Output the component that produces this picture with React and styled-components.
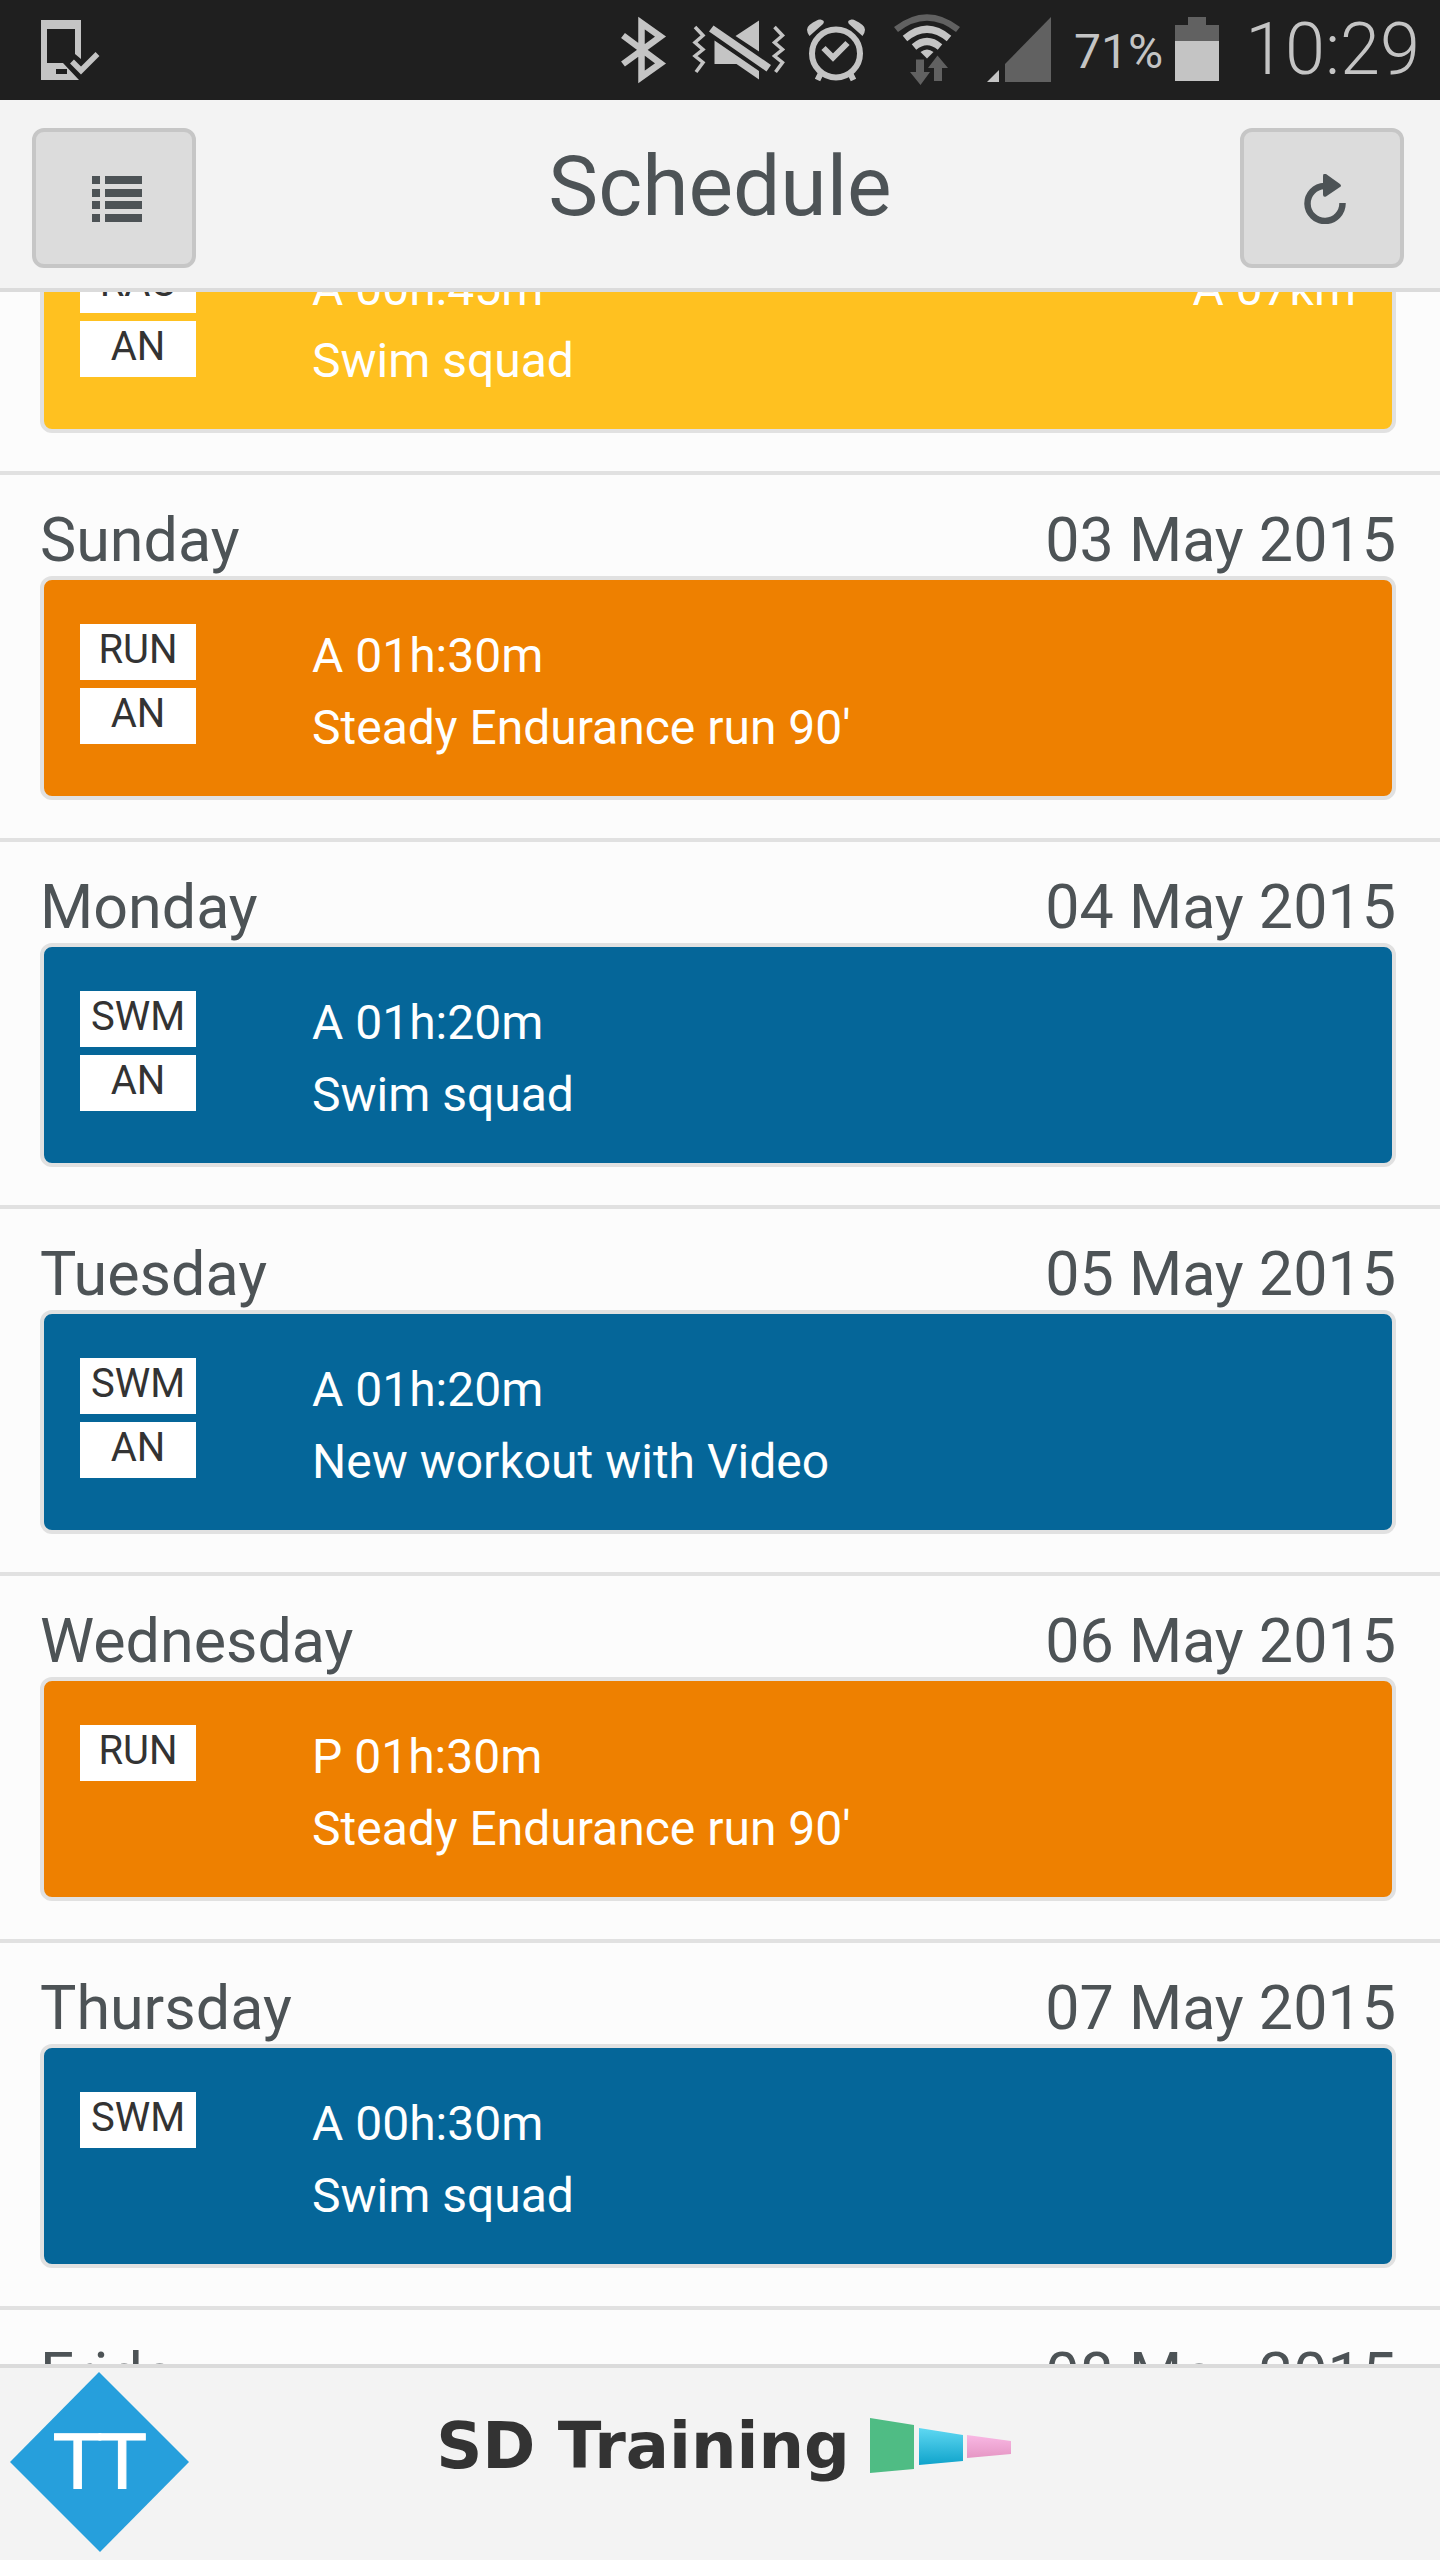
import React, { useLayoutEffect, useRef } from 'react';
import styled, { createGlobalStyle } from 'styled-components';

const colors = {
  statusBar: '#1f1f1f',
  statusIcon: '#c4c4c4',
  statusDim: '#616161',
  bar: '#f3f3f3',
  barBorder: '#dbdbdb',
  page: '#fcfcfc',
  line: '#e1e1e1',
  button: '#dcdcdc',
  buttonBorder: '#c6c6c6',
  text: '#4d5356',
  dark: '#333333',
  white: '#ffffff',
  brand: '#269fdc',
};

const sports = {
  RAC: '#ffc120',
  RUN: '#ee8000',
  SWM: '#056699',
};

const SCROLL_START = 188;

const days = [
  {
    name: 'Saturday',
    date: '02 May 2015',
    workout: { sport: 'RAC', tags: ['RAC', 'AN'], time: 'A 00h:45m', distance: 'A 07km', title: 'Swim squad' },
  },
  {
    name: 'Sunday',
    date: '03 May 2015',
    workout: { sport: 'RUN', tags: ['RUN', 'AN'], time: 'A 01h:30m', title: "Steady Endurance run 90'" },
  },
  {
    name: 'Monday',
    date: '04 May 2015',
    workout: { sport: 'SWM', tags: ['SWM', 'AN'], time: 'A 01h:20m', title: 'Swim squad' },
  },
  {
    name: 'Tuesday',
    date: '05 May 2015',
    workout: { sport: 'SWM', tags: ['SWM', 'AN'], time: 'A 01h:20m', title: 'New workout with Video' },
  },
  {
    name: 'Wednesday',
    date: '06 May 2015',
    workout: { sport: 'RUN', tags: ['RUN'], time: 'P 01h:30m', title: "Steady Endurance run 90'" },
  },
  {
    name: 'Thursday',
    date: '07 May 2015',
    workout: { sport: 'SWM', tags: ['SWM'], time: 'A 00h:30m', title: 'Swim squad' },
  },
  { name: 'Friday', date: '08 May 2015' },
];

const GlobalStyle = createGlobalStyle`
  *,
  *:before,
  *:after {
    box-sizing: border-box;
  }

  body {
    margin: 0;
    background: ${colors.page};
    font-family: Roboto, 'Liberation Sans', sans-serif;
  }
`;

const Screen = styled.div`
  display: flex;
  flex-direction: column;
  height: 100vh;
  color: ${colors.text};
`;

const StatusBar = styled.div`
  display: flex;
  flex: none;
  align-items: center;
  justify-content: space-between;
  padding: 0 20px 0 40px;
  background: ${colors.statusBar};
  color: ${colors.statusIcon};

  svg {
    display: block;
  }
`;

const StatusGroup = styled.div`
  display: flex;
  align-items: center;
  gap: 20px;
`;

const Battery = styled.div`
  display: flex;
  align-items: flex-end;
  gap: 12px;
  padding-right: 6px;
  font-size: 48px;
  line-height: 96px;
`;

const Clock = styled.time`
  font-size: 72px;
  font-weight: 300;
  line-height: 96px;
`;

const Header = styled.header`
  display: flex;
  flex: none;
  align-items: center;
  justify-content: space-between;
  padding: 28px 36px 20px 32px;
  border-bottom: 4px solid ${colors.barBorder};
  background: ${colors.bar};
`;

const Title = styled.h1`
  margin: 0;
  padding: 0 0 22px 4px;
  font-size: 84px;
  font-weight: 400;
  line-height: 96px;
`;

const HeaderButton = styled.button`
  display: flex;
  align-items: center;
  justify-content: center;
  width: 164px;
  height: 140px;
  padding: 2px 0 0 6px;
  border: 4px solid ${colors.buttonBorder};
  border-radius: 12px;
  background: ${colors.button};
  color: ${colors.text};
  cursor: pointer;
`;

const Schedule = styled.main`
  flex: 1;
  min-height: 0;
  overflow-y: auto;
  scrollbar-width: none;
`;

const Day = styled.section`
  padding: 0 44px 38px 40px;
  border-top: 4px solid ${colors.line};
`;

const DayHeading = styled.div`
  display: flex;
  justify-content: space-between;
  padding-top: 29px;
  font-size: 61px;
  line-height: 72px;
`;

const DayName = styled.h2`
  margin: 0;
  font-size: inherit;
  font-weight: 400;
`;

const Card = styled.article`
  display: flex;
  padding: 40px 36px 32px;
  border: 4px solid ${colors.line};
  border-radius: 12px;
  background: ${({ $sport }) => sports[$sport]};
  color: ${colors.white};
`;

const Tags = styled.div`
  display: flex;
  flex: none;
  flex-direction: column;
  gap: 8px;
  width: 232px;
  padding-top: 4px;
`;

const Tag = styled.span`
  width: 116px;
  height: 56px;
  background: ${colors.white};
  color: ${colors.dark};
  font-size: 40px;
  line-height: 52px;
  text-align: center;
`;

const Details = styled.div`
  flex: 1;
  font-size: 48px;
  line-height: 72px;
`;

const Figures = styled.div`
  display: flex;
  justify-content: space-between;
`;

const Footer = styled.footer`
  display: grid;
  flex: none;
  grid-template-columns: 1fr auto 1fr;
  align-items: start;
  height: 196px;
  padding: 4px 10px;
  border-top: 4px solid ${colors.barBorder};
  background: ${colors.bar};
`;

const Brand = styled.div`
  display: flex;
  align-items: center;
  gap: 20px;
  padding: 36px 0 0 8px;
  color: ${colors.dark};
  font-family: 'DejaVu Sans', sans-serif;
  font-size: 64px;
  font-weight: 700;
  line-height: 76px;
`;

const DeviceIcon = () => (
  <svg width="61" height="100" viewBox="40 0 61 100" fill={colors.statusIcon}>
    <path fillRule="evenodd" d="M41 20h40v39l-6-5V29H47v34h16l16 17H41zM56 69v5h11v-5z" />
    <path d="M72 61.5l9 9L97.500 54" fill="none" stroke={colors.statusIcon} strokeWidth="5.500" />
  </svg>
);

const BluetoothIcon = () => (
  <svg width="52" height="100" viewBox="620 0 52 100" fill="none" stroke={colors.statusIcon}>
    <path d="M623 35.500L660.500 63.500L641.500 77V23L660.500 36.500L623 64" strokeWidth="6.500" />
  </svg>
);

const MuteIcon = () => (
  <svg width="94" height="100" viewBox="692 0 94 100" fill={colors.statusIcon}>
    <path d="M713.500 25.500L771 65l-4.500 6.500L709 31.500zM759 20.500v31L735.500 36zM714.500 40.500L759 71v8.500L736.500 64h-22z" />
    <path
      d="M695 27l8 8.500-8 7 8 7-8 6.500 8 6.500-7 9.500M774.500 27l8 8.500-8 7 8 7-8 6.500 8 6.500-7 9.500"
      fill="none"
      stroke={colors.statusIcon}
      strokeWidth="3.500"
    />
  </svg>
);

const AlarmIcon = () => (
  <svg width="68" height="100" viewBox="806 0 68 100" fill="none" stroke={colors.statusIcon}>
    <circle cx="836" cy="53.500" r="24" strokeWidth="6" />
    <path d="M823.500 48l9.500 9.500L847.500 43" strokeWidth="6" />
    <path d="M820.500 74l-3 6M850.500 74l3 6" strokeWidth="6" />
    <path
      d="M809.500 36q-5-7 0-11 8-6 11-5.500 5 1 2.500 4.500zM862.500 36q5-7 0-11-8-6-11-5.500-5 1-2.500 4.500z"
      fill={colors.statusIcon}
      stroke="none"
    />
  </svg>
);

const WifiIcon = () => (
  <svg width="72" height="100" viewBox="894 0 72 100" fill="none" stroke={colors.statusIcon}>
    <path d="M896 29.500Q927 5.500 958 29.500" stroke={colors.statusDim} strokeWidth="6.500" />
    <path d="M905 38.500Q927 20 949 38.500M914 47Q927 36 940 47" strokeWidth="7" />
    <path d="M920.500 52q6.500-5 13 0l-6.500 6.500z" fill={colors.statusIcon} stroke="none" />
    <path d="M916 59.500h8V72h6l-9.500 13L910 72h6zM934 81V68h-6l9.500-12.500L948 68h-6v13z" fill={colors.statusDim} stroke="none" />
  </svg>
);

const SignalIcon = () => (
  <svg width="68" height="100" viewBox="986 0 68 100">
    <path d="M987 82l12-12v12z" fill={colors.statusIcon} />
    <path d="M1005 82V64l46-47v65z" fill={colors.statusDim} />
  </svg>
);

const BatteryIcon = () => (
  <svg width="44" height="100" viewBox="0 0 44 100">
    <path d="M13 17h18v8h13v16H0V25h13z" fill={colors.statusDim} />
    <path d="M0 41h44v40H0z" fill={colors.statusIcon} />
  </svg>
);

const ListIcon = () => (
  <svg width="50" height="46" viewBox="0 0 50 46" fill="currentColor">
    <path d="M0 0h8v8H0zM13 0h37v8H13zM0 13h8v8H0zM13 13h37v8H13zM0 25h8v8H0zM13 25h37v8H13zM0 38h8v8H0zM13 38h37v8H13z" />
  </svg>
);

const RefreshIcon = () => (
  <svg width="42" height="50" viewBox="0 0 42 50">
    <path d="M20.500 12A17.500 17.500 0 1 0 38.500 29" fill="none" stroke="currentColor" strokeWidth="6.500" />
    <path d="M19 2q0-3 3-2l14 10q2 2 0 3L22 22.500q-3 1-3-2z" fill="currentColor" />
  </svg>
);

const BrandDiamond = () => (
  <svg width="180" height="180" viewBox="0 0 180 180">
    <path d="M89 0L179 90L90 180L0 90z" fill={colors.brand} />
    <text
      x="90"
      y="116"
      fill={colors.white}
      stroke={colors.white}
      strokeWidth="1"
      fontFamily="'DejaVu Sans', sans-serif"
      fontSize="75"
      textAnchor="middle"
    >
      TT
    </text>
  </svg>
);

const BrandMark = () => (
  <svg width="142" height="56" viewBox="0 0 142 56">
    <defs>
      <linearGradient id="markBlue" x1="0" y1="0" x2="0" y2="1">
        <stop offset="0" stopColor="#5fd8f2" />
        <stop offset="1" stopColor="#0fa3cb" />
      </linearGradient>
      <linearGradient id="markPink" x1="0" y1="0" x2="0" y2="1">
        <stop offset="0" stopColor="#f9b8e4" />
        <stop offset="1" stopColor="#e596c4" />
      </linearGradient>
    </defs>
    <path d="M0 0l44 7v44L0 55z" fill="#4fbc84" />
    <path d="M49 10l44 7v26l-44 4z" fill="url(#markBlue)" />
    <path d="M97 17l44 6v13l-44 4z" fill="url(#markPink)" />
  </svg>
);

const Workout = ({ sport, tags, time, distance, title }) => (
  <Card $sport={sport}>
    <Tags>
      {tags.map(tag => (
        <Tag key={tag}>{tag}</Tag>
      ))}
    </Tags>
    <Details>
      <Figures>
        <span>{time}</span>
        {distance && <span>{distance}</span>}
      </Figures>
      <div>{title}</div>
    </Details>
  </Card>
);

const App = () => {
  const schedule = useRef(null);

  useLayoutEffect(() => {
    schedule.current.scrollTop = SCROLL_START;
  }, []);

  return (
    <Screen>
      <GlobalStyle />
      <StatusBar>
        <DeviceIcon />
        <StatusGroup>
          <BluetoothIcon />
          <MuteIcon />
          <AlarmIcon />
          <WifiIcon />
          <SignalIcon />
          <Battery>
            <span>71%</span>
            <BatteryIcon />
          </Battery>
          <Clock>10:29</Clock>
        </StatusGroup>
      </StatusBar>
      <Header>
        <HeaderButton type="button" aria-label="Menu">
          <ListIcon />
        </HeaderButton>
        <Title>Schedule</Title>
        <HeaderButton type="button" aria-label="Refresh">
          <RefreshIcon />
        </HeaderButton>
      </Header>
      <Schedule ref={schedule}>
        {days.map(({ name, date, workout }) => (
          <Day key={date}>
            <DayHeading>
              <DayName>{name}</DayName>
              <time>{date}</time>
            </DayHeading>
            {workout && <Workout {...workout} />}
          </Day>
        ))}
      </Schedule>
      <Footer>
        <BrandDiamond />
        <Brand>
          <span>SD Training</span>
          <BrandMark />
        </Brand>
      </Footer>
    </Screen>
  );
};

export default App;
